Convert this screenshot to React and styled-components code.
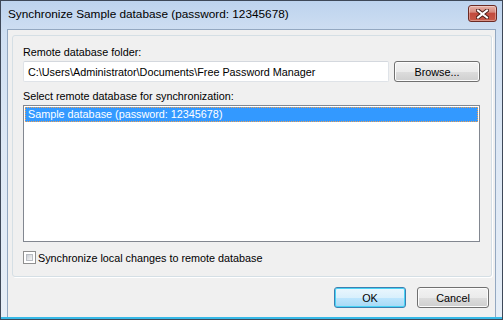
import React from "react";
import styled, { createGlobalStyle } from "styled-components";

const GlobalStyle = createGlobalStyle`
  html, body {
    margin: 0;
    padding: 0;
    background: #ffffff;
  }
  * {
    box-sizing: border-box;
  }
`;

const Window = styled.div`
  width: 503px;
  height: 320px;
  display: flex;
  flex-direction: column;
  padding: 0 6px 2px 6px;
  border: 1px solid #3e4858;
  background: linear-gradient(180deg, #bdd3ee 0%, #cfdff2 10%, #dde8f5 45%, #e6eef7 100%);
  box-shadow: inset 0 -2px 0 #36b8e6;
  font-family: "Liberation Sans", Arial, sans-serif;
  font-size: 10.8px;
  color: #000;
`;

const TitleBar = styled.div`
  height: 28px;
  display: flex;
  align-items: flex-start;
  justify-content: space-between;
  padding: 0 0 0 1px;
`;

const Title = styled.div`
  font-size: 11.8px;
  line-height: 14px;
  margin-top: 6px;
  color: #000;
`;

const CloseButton = styled.div`
  width: 29px;
  height: 17px;
  margin-top: 4px;
  margin-right: -1px;
  border: 1px solid #6b2a24;
  border-radius: 3px;
  background: linear-gradient(180deg, #e6b0a6 0%, #d78a7e 40%, #c24a3d 50%, #c75a48 100%);
  box-shadow: inset 0 0 0 1px rgba(255, 255, 255, 0.35);
  display: flex;
  align-items: center;
  justify-content: center;
`;

const Body = styled.div`
  flex: 1;
  display: flex;
  flex-direction: column;
  background: #f0f0f0;
  border: 1px solid #93a8c1;
  border-bottom: none;
  padding: 5px 3px 0 4px;
`;

const Panel = styled.div`
  display: flex;
  flex-direction: column;
  border: 1px solid #d5dfe5;
  border-radius: 3px;
  box-shadow: 1px 1px 0 #ffffff;
  padding: 9px 11px 12px 10px;
`;

const Label = styled.div`
  line-height: 14px;
  height: 14px;
  margin-bottom: 2px;
  white-space: nowrap;
`;

const Row = styled.div`
  display: flex;
  gap: 5px;
  margin-bottom: 7px;
`;

const TextBox = styled.div`
  flex: 1;
  height: 21px;
  display: flex;
  align-items: center;
  padding-left: 4px;
  background: #ffffff;
  border: 1px solid #dfe3e8;
  border-top-color: #d4d8de;
  border-radius: 2px;
  white-space: nowrap;
  overflow: hidden;
`;

const Button = styled.div`
  width: ${(p) => p.$width}px;
  height: 21px;
  display: flex;
  align-items: center;
  justify-content: center;
  border: 1px solid ${(p) => (p.$default ? "#3c7fb1" : "#707070")};
  border-radius: 3px;
  background: ${(p) =>
    p.$default
      ? "linear-gradient(180deg, #eaf6fd 0%, #d9f0fc 50%, #bee6fd 51%, #a7d9f5 100%)"
      : "linear-gradient(180deg, #f2f2f2 0%, #ebebeb 50%, #dddddd 51%, #cfcfcf 100%)"};
  box-shadow: inset 0 0 0 1px ${(p) => (p.$default ? "#48d3f5" : "#fcfcfc")};
  padding-top: 1px;
`;

const ListBox = styled.div`
  height: 137px;
  background: #ffffff;
  border: 1px solid #828790;
  padding: 1px;
`;

const ListItem = styled.div`
  height: 15px;
  line-height: 13px;
  padding-left: 2px;
  background: ${(p) => (p.$selected ? "#3399ff" : "transparent")};
  color: ${(p) => (p.$selected ? "#ffffff" : "#000000")};
  border: 1px dotted ${(p) => (p.$selected ? "#f0a050" : "transparent")};
  white-space: nowrap;
`;

const CheckRow = styled.div`
  display: flex;
  align-items: center;
  gap: 2px;
  margin-top: 9px;
  height: 13px;
`;

const CheckBox = styled.div`
  width: 13px;
  height: 13px;
  border: 1px solid #8f8f8f;
  background: #ffffff;
  padding: 2px;
  &::after {
    content: "";
    display: block;
    width: 100%;
    height: 100%;
    background: linear-gradient(135deg, #cbcfd5 0%, #f6f6f6 100%);
    border: 1px solid #b9bdc3;
    box-sizing: border-box;
  }
`;

const Footer = styled.div`
  display: flex;
  justify-content: flex-end;
  gap: 11px;
  padding: 10px 3px 0 0;
`;

function CloseGlyph() {
  return (
    <svg width="13" height="10" viewBox="0 0 13 10">
      <path d="M2 1.5 L11 8.5 M11 1.5 L2 8.5" stroke="#4a1d18" strokeWidth="4" strokeLinecap="square" />
      <path d="M2 1.5 L11 8.5 M11 1.5 L2 8.5" stroke="#ffffff" strokeWidth="2" strokeLinecap="square" />
    </svg>
  );
}

export default function App() {
  return (
    <>
      <GlobalStyle />
      <Window>
        <TitleBar>
          <Title>Synchronize Sample database (password: 12345678)</Title>
          <CloseButton>
            <CloseGlyph />
          </CloseButton>
        </TitleBar>
        <Body>
          <Panel>
            <Label>Remote database folder:</Label>
            <Row>
              <TextBox>C:\Users\Administrator\Documents\Free Password Manager</TextBox>
              <Button $width={86}>Browse...</Button>
            </Row>
            <Label>Select remote database for synchronization:</Label>
            <ListBox>
              <ListItem $selected>Sample database (password: 12345678)</ListItem>
            </ListBox>
            <CheckRow>
              <CheckBox />
              <span>Synchronize local changes to remote database</span>
            </CheckRow>
          </Panel>
          <Footer>
            <Button $width={72} $default>OK</Button>
            <Button $width={72}>Cancel</Button>
          </Footer>
        </Body>
      </Window>
    </>
  );
}
